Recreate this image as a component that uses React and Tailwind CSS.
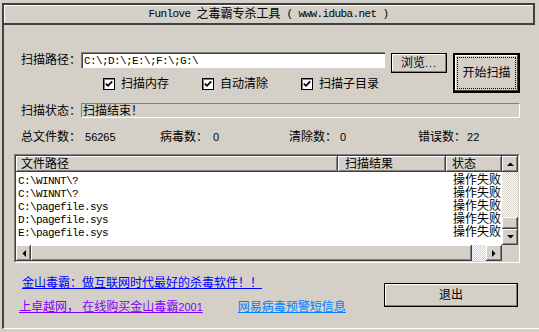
const mono = "font-['Liberation_Mono',monospace] text-[11px] tracking-[-0.6px]";
const raised =
  "bg-[#d4d0c8] shadow-[inset_-1px_-1px_#404040,inset_1px_1px_#ffffff,inset_-2px_-2px_#808080,inset_2px_2px_#d4d0c8]";
const btn =
  "bg-[#d4d0c8] border border-black shadow-[inset_-1px_-1px_#808080,inset_1px_1px_#ffffff] flex items-center justify-center";
const checker =
  "bg-[image:repeating-conic-gradient(#ffffff_0%_25%,#d4d0c8_0%_50%)] bg-[length:2px_2px]";

const rows = [
  ["C:\\WINNT\\?", "操作失败"],
  ["C:\\WINNT\\?", "操作失败"],
  ["C:\\pagefile.sys", "操作失败"],
  ["D:\\pagefile.sys", "操作失败"],
  ["E:\\pagefile.sys", "操作失败"],
];

function Check({ label }) {
  return (
    <div className="w-[99px] shrink-0 flex items-center gap-[6px] whitespace-nowrap">
      <span className="w-[12px] h-[12px] shrink-0 bg-white border border-black shadow-[inset_1px_1px_#808080] flex items-center justify-center">
        <svg width="8" height="8" viewBox="0 0 8 8">
          <polyline points="0.8,3.6 3,5.8 7.2,1.4" fill="none" stroke="#000" strokeWidth="1.8" />
        </svg>
      </span>
      <span>{label}</span>
    </div>
  );
}

function Arrow({ dir }) {
  const pts = {
    up: "0,4 7,4 3.5,0.5",
    down: "0,0 7,0 3.5,3.5",
    left: "4,0 4,7 0.5,3.5",
    right: "0,0 0,7 3.5,3.5",
  }[dir];
  const vertical = dir === "up" || dir === "down";
  return (
    <svg width={vertical ? 7 : 4} height={vertical ? 4 : 7} viewBox={vertical ? "0 0 7 4" : "0 0 4 7"}>
      <polygon points={pts} fill="#000" />
    </svg>
  );
}

function Stat({ label, value, w, gap }) {
  return (
    <div className={`flex items-center shrink-0 whitespace-nowrap ${w}`}>
      <span>{label}</span>
      <span className={`text-[11px] ${gap}`}>{value}</span>
    </div>
  );
}

export default function App() {
  return (
    <div className="w-[539px] h-[332px] bg-[#d4d0c8] pt-[3px] pl-[2px] overflow-hidden text-black text-[12px] leading-[16px] font-['Liberation_Sans','Noto_Sans_CJK_SC',sans-serif]">
      <div className="h-[326px] border-l-2 border-b border-l-[#404040] border-b-white flex flex-col">
        {/* title */}
        <div className="w-[531px] h-[22px] shrink-0 border-t-2 border-r-2 border-b-2 border-[#404040] shadow-[inset_1px_1px_#ffffff] flex items-center justify-center whitespace-nowrap">
          <span className={mono}>Funlove&nbsp;</span>
          <span>之毒霸专杀工具</span>
          <span className={mono}>&nbsp;(&nbsp;www.iduba.net&nbsp;)</span>
        </div>

        {/* path + options */}
        <div className="mt-[27px] ml-[17px] flex items-start">
          <div className="w-[426px] shrink-0 flex flex-col">
            <div className="flex items-start h-[21px]">
              <span className="w-[60px] shrink-0 whitespace-nowrap">扫描路径：</span>
              <div className="w-[304px] h-[16px] shrink-0 bg-white border-t border-l border-[#808080] shadow-[inset_1px_1px_#404040] pl-[2px] flex items-center">
                <span className={mono}>C:\;D:\;E:\;F:\;G:\</span>
              </div>
              <div className={`${btn} ml-[6px] mt-[1px] w-[56px] h-[20px] shrink-0`}>
                <span>浏览</span>
                <span className="text-[11px] tracking-[1px]">...</span>
              </div>
            </div>
            <div className="mt-[4px] ml-[82px] h-[14px] flex items-center">
              <Check label="扫描内存" />
              <Check label="自动清除" />
              <Check label="扫描子目录" />
            </div>
          </div>
          <div className="ml-[6px] mt-[1px] w-[67px] h-[40px] shrink-0 border-2 border-black bg-[#d4d0c8] shadow-[inset_-1px_-1px_#404040,inset_1px_1px_#ffffff] p-[2px]">
            <div className="w-full h-full border border-dotted border-black flex items-center justify-center whitespace-nowrap">
              开始扫描
            </div>
          </div>
        </div>

        {/* status */}
        <div className="mt-[10px] ml-[17px] h-[15px] flex items-center">
          <span className="w-[60px] shrink-0 whitespace-nowrap">扫描状态：</span>
          <div className="w-[439px] h-[15px] shrink-0 border-t border-l border-[#808080] border-b border-r border-b-white border-r-white pl-[1px] flex items-center whitespace-nowrap">
            扫描结束！
          </div>
        </div>

        {/* counters */}
        <div className="mt-[11px] ml-[17px] h-[16px] flex items-center">
          <Stat label="总文件数：" value="56265" w="w-[139px]" gap="ml-[4px]" />
          <Stat label="病毒数：" value="0" w="w-[129px]" gap="ml-[5px]" />
          <Stat label="清除数：" value="0" w="w-[129px]" gap="ml-[3px]" />
          <Stat label="错误数：" value="22" w="w-[90px]" gap="ml-[1px]" />
        </div>

        {/* list view */}
        <div className="mt-[9px] ml-[10px] w-[506px] h-[109px] shrink-0 border border-t-[#808080] border-l-[#808080] border-r-white border-b-white">
          <div className="w-full h-full border border-t-[#404040] border-l-[#404040] border-r-[#d4d0c8] border-b-[#d4d0c8] flex flex-col">
            <div className="h-[89px] flex">
              <div className="w-[486px] bg-white flex flex-col overflow-hidden">
                <div className="h-[16px] flex whitespace-nowrap">
                  <div className={`${raised} w-[322px] shrink-0 pl-[5px] flex items-center`}>文件路径</div>
                  <div className={`${raised} w-[108px] shrink-0 pl-[7px] flex items-center`}>扫描结果</div>
                  <div className={`${raised} w-[56px] shrink-0 pl-[6px] flex items-center`}>状态</div>
                </div>
                <div className="pt-[2px] flex flex-col">
                  {rows.map(([path, state], i) => (
                    <div key={i} className="h-[13px] flex items-center whitespace-nowrap">
                      <span className={`w-[430px] shrink-0 pl-[2px] ${mono}`}>{path}</span>
                      <span className="pl-[7px] leading-[13px]">{state}</span>
                    </div>
                  ))}
                </div>
              </div>
              <div className="w-[16px] flex flex-col">
                <div className={`${raised} h-[16px] flex items-center justify-center`}>
                  <Arrow dir="up" />
                </div>
                <div className={`${checker} h-[45px]`} />
                <div className={`${raised} h-[12px]`} />
                <div className={`${raised} h-[16px] flex items-center justify-center`}>
                  <Arrow dir="down" />
                </div>
              </div>
            </div>
            <div className="h-[16px] flex">
              <div className={`${raised} w-[15px] flex items-center justify-center`}>
                <Arrow dir="left" />
              </div>
              <div className={`${raised} w-[441px]`} />
              <div className={`${checker} w-[14px]`} />
              <div className={`${raised} w-[16px] flex items-center justify-center`}>
                <Arrow dir="right" />
              </div>
              <div className="w-[16px] bg-[#d4d0c8]" />
            </div>
          </div>
        </div>

        {/* links + exit */}
        <div className="mt-[12px] ml-[15px] flex items-start">
          <div className="w-[365px] shrink-0 flex flex-col whitespace-nowrap">
            <a className="ml-[3px] h-[16px] text-[#0000ff] underline underline-offset-[1px]">
              金山毒霸：做互联网时代最好的杀毒软件！！
            </a>
            <div className="mt-[8px] h-[16px] flex">
              <a className="text-[#8000ff] underline underline-offset-[1px]">
                上卓越网，&nbsp;在线购买金山毒霸<span className="text-[11px]">2001</span>
              </a>
              <a className="ml-[35px] text-[#0080ff] underline underline-offset-[1px]">网易病毒预警短信息</a>
            </div>
          </div>
          <div className={`${btn} mt-[8px] w-[134px] h-[24px] shrink-0`}>退出</div>
        </div>
      </div>
    </div>
  );
}
